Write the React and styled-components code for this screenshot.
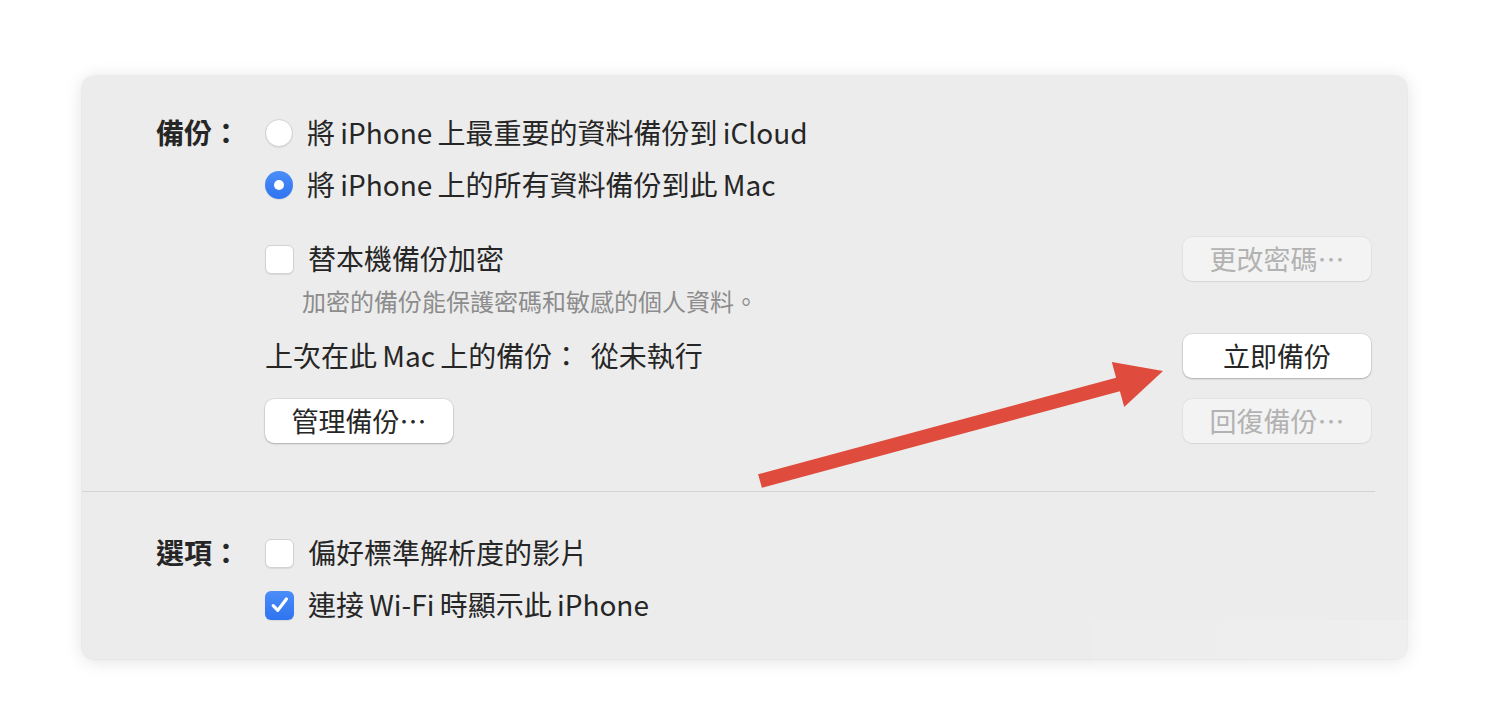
import React from 'react';
import styled, { createGlobalStyle } from 'styled-components';

const GlobalStyle = createGlobalStyle`
  html, body {
    margin: 0;
    padding: 0;
    background: #ffffff;
  }
  body {
    font-family: "Noto Sans CJK TC", "Inter", "Liberation Sans", sans-serif;
    color: #262626;
  }
`;

const Page = styled.div`
  position: relative;
  width: 1488px;
  height: 704px;
  padding: 76px 0 0 82px;
  box-sizing: border-box;
  overflow: hidden;
`;

const Panel = styled.div`
  width: 1325px;
  background: #ececec;
  border-radius: 12px;
  box-shadow: 0 2px 18px rgba(0, 0, 0, 0.12), 0 0 0 1px rgba(0, 0, 0, 0.03);
`;

const Section = styled.div`
  display: grid;
  grid-template-columns: 107px 1fr;
  padding: ${p => p.$pad};
  padding-left: 76px;
  padding-right: 36px;
`;

const Label = styled.div`
  font-size: 28px;
  font-weight: 700;
  height: 52px;
  line-height: 50px;
  margin-left: -2px;
`;

const Content = styled.div`
  display: flex;
  flex-direction: column;
`;

const Text = styled.span`
  line-height: 1;
  position: relative;
  top: -1px;
  white-space: pre;
  word-spacing: -1px;
`;

const OptionRow = styled.div`
  display: flex;
  align-items: center;
  height: 52px;
  font-size: 28px;
  gap: 14px;
`;

const SplitRow = styled.div`
  display: flex;
  align-items: center;
  justify-content: space-between;
  height: 44px;
  margin-top: ${p => p.$mt || 0}px;
  font-size: 28px;
`;

const Left = styled.div`
  display: flex;
  align-items: center;
  gap: 14px;
`;

const Radio = styled.span`
  width: 28px;
  height: 28px;
  border-radius: 50%;
  box-sizing: border-box;
  flex-shrink: 0;
  display: flex;
  align-items: center;
  justify-content: center;
  background: ${p => (p.$on ? 'linear-gradient(#4b8df8, #2f74f0)' : '#ffffff')};
  border: ${p => (p.$on ? 'none' : '1px solid #d2d2d2')};
  box-shadow: 0 1px 1px rgba(0, 0, 0, 0.08);

  &::after {
    content: '';
    display: ${p => (p.$on ? 'block' : 'none')};
    width: 10px;
    height: 10px;
    border-radius: 50%;
    background: #ffffff;
  }
`;

const Check = styled.span`
  width: 29px;
  height: 29px;
  border-radius: 6px;
  box-sizing: border-box;
  flex-shrink: 0;
  display: flex;
  align-items: center;
  justify-content: center;
  background: ${p => (p.$on ? 'linear-gradient(#4b8df8, #2f74f0)' : '#ffffff')};
  border: ${p => (p.$on ? 'none' : '1px solid #d2d2d2')};
  box-shadow: 0 1px 1px rgba(0, 0, 0, 0.08);
`;

const Hint = styled.div`
  font-size: 24px;
  color: #8c8c8c;
  line-height: 30px;
  margin-top: 5px;
  padding-left: 37px;
`;

const Button = styled.button`
  width: 188px;
  height: 44px;
  border: none;
  border-radius: 9px;
  font-family: inherit;
  font-size: 27px;
  line-height: 1;
  padding: 0 0 2px;
  cursor: default;
  background: ${p => (p.$disabled ? '#f3f3f3' : '#ffffff')};
  color: ${p => (p.$disabled ? '#b2b2b2' : '#262626')};
  box-shadow: ${p =>
    p.$disabled
      ? '0 0 0 1px rgba(0,0,0,0.04), 0 1px 1px rgba(0,0,0,0.06)'
      : '0 0 0 1px rgba(0,0,0,0.06), 0 1px 2px rgba(0,0,0,0.22)'};
`;

const Separator = styled.div`
  height: 1px;
  background: #d3d3d3;
  margin-right: 32px;
`;

const ArrowSvg = styled.svg`
  position: absolute;
  left: 740px;
  top: 350px;
`;

const Haze = styled.div`
  position: absolute;
  left: 1093px;
  top: 620px;
  width: 395px;
  height: 84px;
  background: linear-gradient(to right, rgba(255, 255, 255, 0.06), rgba(255, 255, 255, 0.18));
  pointer-events: none;
`;

function CheckMark() {
  return (
    <svg width="22" height="22" viewBox="0 0 22 22">
      <path d="M4.2 11.6 L8.8 16.4 L17.4 5" fill="none" stroke="#fff" strokeWidth="3.2" strokeLinecap="round" strokeLinejoin="round" />
    </svg>
  );
}

export default function App() {
  return (
    <Page>
      <GlobalStyle />
      <Panel>
        <Section $pad="31px 0 48px">
          <Label>備份：</Label>
          <Content>
            <OptionRow>
              <Radio />
              <Text>將 iPhone 上最重要的資料備份到 iCloud</Text>
            </OptionRow>
            <OptionRow>
              <Radio $on />
              <Text>將 iPhone 上的所有資料備份到此 Mac</Text>
            </OptionRow>

            <SplitRow $mt={26}>
              <Left>
                <Check />
                <Text>替本機備份加密</Text>
              </Left>
              <Button $disabled>更改密碼⋯</Button>
            </SplitRow>
            <Hint>加密的備份能保護密碼和敏感的個人資料。</Hint>

            <SplitRow $mt={18}>
              <Text>上次在此 Mac 上的備份：  從未執行</Text>
              <Button>立即備份</Button>
            </SplitRow>
            <SplitRow $mt={21}>
              <Button>管理備份⋯</Button>
              <Button $disabled>回復備份⋯</Button>
            </SplitRow>
          </Content>
        </Section>

        <Separator />

        <Section $pad="35px 0 28px">
          <Label>選項：</Label>
          <Content>
            <OptionRow>
              <Check />
              <Text>偏好標準解析度的影片</Text>
            </OptionRow>
            <OptionRow>
              <Check $on>
                <CheckMark />
              </Check>
              <Text>連接 Wi-Fi 時顯示此 iPhone</Text>
            </OptionRow>
          </Content>
        </Section>
      </Panel>

      <ArrowSvg width="440" height="150" viewBox="740 350 440 150">
        <polygon
          points="758.1,474.3 1116.1,377.75 1111.8,362 1163,371 1124.2,407 1119.9,391.25 761.9,487.7"
          fill="#df4b3c"
        />
      </ArrowSvg>
      <Haze />
    </Page>
  );
}
